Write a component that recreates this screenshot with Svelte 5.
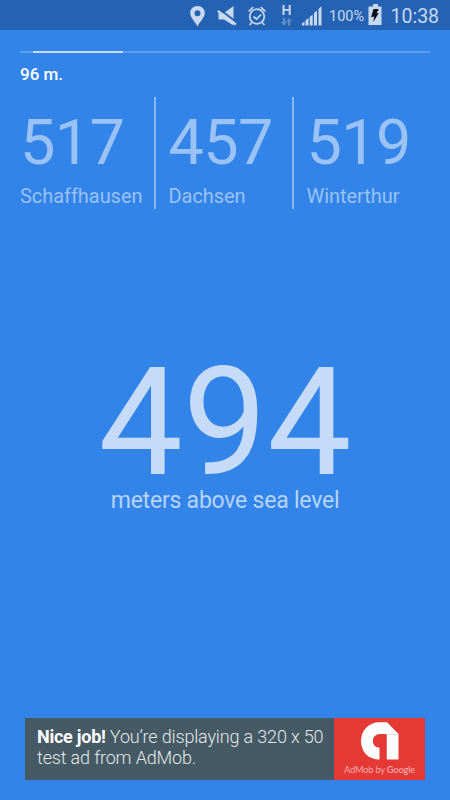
<script>
  const places = [
    { height: 517, name: 'Schaffhausen' },
    { height: 457, name: 'Dachsen' },
    { height: 519, name: 'Winterthur' }
  ];
</script>

<div class="screen">
  <header class="status">
    <svg class="icons" width="144" height="30" viewBox="0 0 144 30" fill="#c8d8ee">
      <path fill-rule="evenodd" d="M10.500 6C6.200 6 3.200 9.100 3.200 13c0 4.300 4.800 8.500 7.300 13.400C13 21.500 17.800 17.300 17.800 13c0-3.900-3-7-7.300-7zm0 4.300a3 3 0 1 1 0 6 3 3 0 0 1 0-6z" />
      <path d="M31.500 13H37L46.500 6v19.500L37 19.500h-5.500z" />
      <path d="M32.500 9.300L50.200 22.700" stroke="#2463b3" stroke-width="2" />
      <path d="M30.800 10.800L49 24.500" stroke="#c8d8ee" stroke-width="2.200" />
      <g fill="none" stroke="#c8d8ee" stroke-width="1.700">
        <circle cx="70" cy="16.500" r="7.300" />
        <path d="M66.500 16.500l3 2.700 4.700-4.700M61.700 11.300l4.600-4.100M78.300 11.300l-4.600-4.100M64.800 22.500l-2.200 2.500M75.200 22.500l2.200 2.500" />
      </g>
      <path d="M95.500 5h2v4h4.200V5h2v10h-2v-4.200h-4.200V15h-2z" />
      <path fill="#638fcb" d="M96 18h2v4h2l-3 3.500-3-3.500h2zM101 25.500h2v-4h2L102 18l-3 3.500h2z" />
      <path d="M115 25.500v-2l2.500-2v4zM118.500 25.500v-5l3-2.500v7.500zM122.700 25.500V17l3-2.500v11zM127 25.500V13l3-2.500v15zM131.500 25.500V9l3-2.800v19.300z" />
    </svg>
    <span class="percent">100%</span>
    <svg class="battery" width="14" height="22" viewBox="0 0 14 22">
      <path fill="#c8d8ee" d="M5 0h5v2.500h3.500V21H.5V2.500H5z" />
      <path fill="#07101c" d="M5.500 5h5.200L8.500 9.500l2.500-.7L5.200 18l1-5.500-3.200.8z" />
    </svg>
    <span class="clock">10:38</span>
  </header>

  <div class="track"><div class="progress"></div></div>
  <div class="distance">96 m.</div>

  <section class="places">
    {#each places as place}
      <div class="place">
        <div class="value">{place.height}</div>
        <div class="name">{place.name}</div>
      </div>
    {/each}
  </section>

  <main>
    <div class="altitude">494</div>
    <div class="unit">meters above sea level</div>
  </main>

  <footer class="ad">
    <p><b>Nice job!</b> You’re displaying a 320 x 50<br />test ad from AdMob.</p>
    <div class="brand">
      <svg width="38" height="38" viewBox="0 0 38 38">
        <path fill="#fff" d="M18.700 37.500C7 37.500 0 29.500 0 19 0 8.500 7.500.3 18.500.3H26L37.500 12v25.500h-12V12.300H19c-4.500 0-7 3-7 6.500 0 4.200 2.800 6.700 6.700 6.700z" />
        <path fill="#e43935" d="M25.500 12.300H19c-4.500 0-7 3-7 6.500 0 4.200 2.800 6.700 6.700 6.700v13h6.800z" />
        <path fill="none" stroke="#d5d5d5" stroke-width=".8" d="M25.500 12.300h12" />
      </svg>
      <div class="by">AdMob by <b>Google</b></div>
    </div>
  </footer>
</div>

<style>
  .screen {
    width: 450px;
    height: 800px;
    background: #3284e8;
    font-family: Roboto, sans-serif;
    color: #fff;
    overflow: hidden;
    display: flex;
    flex-direction: column;
    white-space: nowrap;
  }
  .status {
    height: 30px;
    flex: none;
    background: #2463b3;
    display: flex;
    align-items: center;
    padding-left: 187px;
    color: #c8d8ee;
  }
  .icons { flex: none; }
  .percent { font-size: 14.500px; line-height: 30px; margin-left: -2px; width: 36px; padding-top: 3px; }
  .battery { margin-left: 3px; flex: none; }
  .clock { font-size: 19.500px; line-height: 30px; margin-left: 8.500px; padding-top: 3px; }
  .track { flex: none; margin: 21px 20px 0; height: 2px; background: #5d9ded; padding-left: 13px; }
  .progress { width: 90px; height: 2px; background: #c7dcf8; }
  .distance { margin: 11px 20px 0; font-size: 17px; line-height: 20px; font-weight: 500; height: 20px; }
  .places { display: flex; margin: 13px 0 0 20px; height: 112px; flex: none; }
  .place { padding-left: 12.500px; border-left: 2px solid #8bb9f2; box-sizing: border-box; width: 138px; color: #9ac2f4; }
  .place:first-child { border: 0; padding: 0; width: 134px; }
  .value { font-size: 63px; line-height: 74px; height: 74px; margin-top: 9px; letter-spacing: -0.700px; }
  .name { font-size: 20px; line-height: 24px; margin-top: 4px; letter-spacing: -0.050px; }
  main { margin-top: 159px; text-align: center; flex: none; }
  .altitude { font-size: 150px; line-height: 110px; height: 110px; color: #c5dbf8; }
  .unit { font-size: 23px; line-height: 28px; margin-top: 9px; color: #b7d3f7; letter-spacing: -0.220px; }
  .ad { width: 400px; height: 62px; margin: auto 0 20px 25px; background: #455a64; display: flex; flex: none; }
  p { margin: 8px 0 0 12px; width: 297px; font-size: 18px; line-height: 21px; font-weight: 300; color: #e4e8ea; letter-spacing: -0.160px; }
  p b { color: #fff; font-weight: 700; letter-spacing: -0.250px; }
  .brand { width: 91px; background: #e43935; display: flex; flex-direction: column; align-items: center; padding-top: 4px; box-sizing: border-box; }
  .brand svg { flex: none; }
  .by { font-size: 9.300px; line-height: 12px; margin-top: 4px; color: #f4aaa8; font-family: Lato, sans-serif; letter-spacing: -0.200px; }
  .by b { font-weight: 600; }
</style>
